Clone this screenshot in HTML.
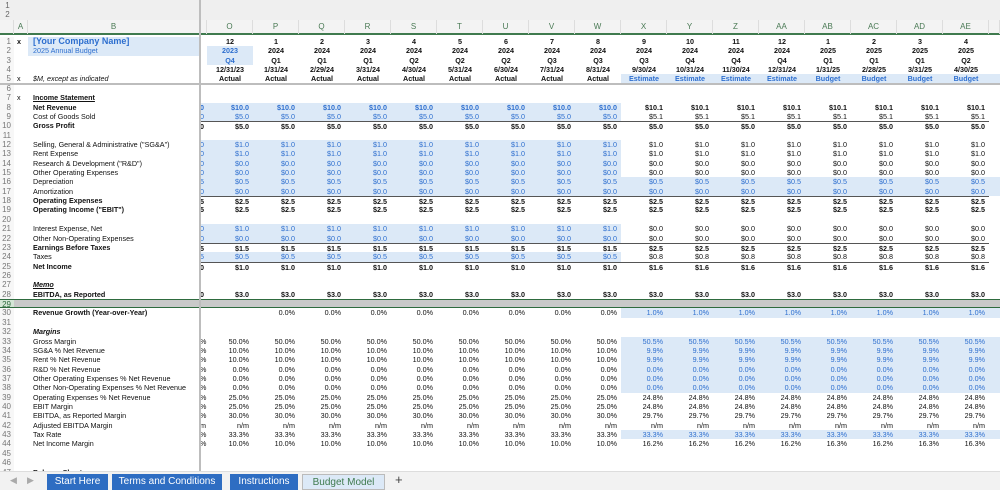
<!DOCTYPE html>
<html><head><meta charset="utf-8"><style>
*{margin:0;padding:0;box-sizing:border-box}
body{width:1000px;height:490px;overflow:hidden;background:#fff;font-family:"Liberation Sans",Arial,sans-serif;font-size:7.2px;color:#111;position:relative}
#top{position:absolute;left:0;top:0;width:1000px;height:20px;background:#efefef}
#top span{position:absolute;left:3px;width:9px;height:9px;font-size:8px;color:#666;text-align:center;line-height:9px}
#hdr{position:absolute;left:0;top:20px;width:1000px;height:15px;background:#f3f3f3;border-bottom:2px solid #3f7a4e;display:grid;grid-template-columns:14px 14px 172px 7px repeat(17,46px) 11px}
#hdr i{font-style:normal;text-align:center;line-height:14px;color:#4a7a55;font-size:8px;border-right:1px solid #ddd}
#grid{position:absolute;left:0;top:37px;width:1000px}
.r{display:grid;grid-template-columns:14px 14px 172px 7px repeat(17,46px) 11px;height:9.36px;line-height:9.36px}
.r>*{font-style:normal;text-decoration:none;text-align:right;padding-right:4px;white-space:nowrap;overflow:hidden}
.r>:first-child{text-align:right;padding-right:3px;color:#777;font-size:8px;background:#f7f7f7;font-weight:normal}
.r>:nth-child(2){text-align:left;padding-left:3px;padding-right:0}
.r>:nth-child(3){text-align:left;padding-left:5px}
.r>:nth-child(4){text-align:left;padding:0}
.c>:nth-child(n+5){text-align:center;padding-right:0}
.b>*{font-weight:bold}
.s{background:#dce9f7}
.bl{color:#2e6fcf}
.t>:nth-child(n+4){border-top:1.5px solid #555}
.sel{background:#c9c9c9;border-top:1.5px solid #2e6b3e;border-bottom:1.5px solid #2e6b3e}
.sel>:first-child{background:#d4e6d6;color:#2e6b3e}
#vf{position:absolute;left:199px;top:0;width:2px;height:471px;background:#bdbdbd}
#hf{position:absolute;left:0;top:83px;width:1000px;height:1.5px;background:#bdbdbd}
#tabs{position:absolute;left:0;top:471px;width:1000px;height:19px;background:#f2f2f2;border-top:1px solid #ddd}
#tabs div{position:absolute;top:2px;height:16px;line-height:16px;text-align:center;font-size:10px;color:#fff;background:#2e6dc2}
</style></head><body>
<div id="top"><span style="top:1px">1</span><span style="top:10px">2</span></div>
<div id="hdr"><i></i><i>A</i><i>B</i><i></i><i>O</i><i>P</i><i>Q</i><i>R</i><i>S</i><i>T</i><i>U</i><i>V</i><i>W</i><i>X</i><i>Y</i><i>Z</i><i>AA</i><i>AB</i><i>AC</i><i>AD</i><i>AE</i><i></i></div>
<div id="grid">
<div class="r c b"><i>1</i><i>x</i><i class="s bl" style="font-size:9px">[Your Company Name]</i><i></i><i>12</i><i>1</i><i>2</i><i>3</i><i>4</i><i>5</i><i>6</i><i>7</i><i>8</i><i>9</i><i>10</i><i>11</i><i>12</i><i>1</i><i>2</i><i>3</i><i>4</i></div>
<div class="r c b"><i>2</i><i></i><i class="s bl" style="font-weight:normal">2025 Annual Budget</i><i></i><i class="s bl">2023</i><i>2024</i><i>2024</i><i>2024</i><i>2024</i><i>2024</i><i>2024</i><i>2024</i><i>2024</i><i>2024</i><i>2024</i><i>2024</i><i>2024</i><i>2025</i><i>2025</i><i>2025</i><i>2025</i></div>
<div class="r c b"><i>3</i><i></i><i></i><i></i><i class="s bl">Q4</i><i>Q1</i><i>Q1</i><i>Q1</i><i>Q2</i><i>Q2</i><i>Q2</i><i>Q3</i><i>Q3</i><i>Q3</i><i>Q4</i><i>Q4</i><i>Q4</i><i>Q1</i><i>Q1</i><i>Q1</i><i>Q2</i></div>
<div class="r c b"><i>4</i><i></i><i></i><i></i><i>12/31/23</i><i>1/31/24</i><i>2/29/24</i><i>3/31/24</i><i>4/30/24</i><i>5/31/24</i><i>6/30/24</i><i>7/31/24</i><i>8/31/24</i><i>9/30/24</i><i>10/31/24</i><i>11/30/24</i><i>12/31/24</i><i>1/31/25</i><i>2/28/25</i><i>3/31/25</i><i>4/30/25</i></div>
<div class="r c b"><i>5</i><i style="font-weight:normal">x</i><i style="font-weight:normal;font-style:italic">$M, except as indicated</i><i></i><i>Actual</i><i>Actual</i><i>Actual</i><i>Actual</i><i>Actual</i><i>Actual</i><i>Actual</i><i>Actual</i><i>Actual</i><i class="s bl">Estimate</i><i class="s bl">Estimate</i><i class="s bl">Estimate</i><i class="s bl">Estimate</i><i class="s bl">Budget</i><i class="s bl">Budget</i><i class="s bl">Budget</i><i class="s bl">Budget</i><i class="s"></i></div>
<div class="r"><i>6</i></div>
<div class="r"><i>7</i><i>x</i><i style="font-weight:bold;text-decoration:underline">Income Statement</i></div>
<div class="r b"><i>8</i><i></i><i>Net Revenue</i><i class="s bl">0</i><i class="s bl">$10.0</i><i class="s bl">$10.0</i><i class="s bl">$10.0</i><i class="s bl">$10.0</i><i class="s bl">$10.0</i><i class="s bl">$10.0</i><i class="s bl">$10.0</i><i class="s bl">$10.0</i><i class="s bl">$10.0</i><i>$10.1</i><i>$10.1</i><i>$10.1</i><i>$10.1</i><i>$10.1</i><i>$10.1</i><i>$10.1</i><i>$10.1</i></div>
<div class="r"><i>9</i><i></i><i>Cost of Goods Sold</i><i class="s bl">0</i><i class="s bl">$5.0</i><i class="s bl">$5.0</i><i class="s bl">$5.0</i><i class="s bl">$5.0</i><i class="s bl">$5.0</i><i class="s bl">$5.0</i><i class="s bl">$5.0</i><i class="s bl">$5.0</i><i class="s bl">$5.0</i><i>$5.1</i><i>$5.1</i><i>$5.1</i><i>$5.1</i><i>$5.1</i><i>$5.1</i><i>$5.1</i><i>$5.1</i></div>
<div class="r b t"><i>10</i><i></i><i>Gross Profit</i><i>0</i><i>$5.0</i><i>$5.0</i><i>$5.0</i><i>$5.0</i><i>$5.0</i><i>$5.0</i><i>$5.0</i><i>$5.0</i><i>$5.0</i><i>$5.0</i><i>$5.0</i><i>$5.0</i><i>$5.0</i><i>$5.0</i><i>$5.0</i><i>$5.0</i><i>$5.0</i></div>
<div class="r"><i>11</i></div>
<div class="r"><i>12</i><i></i><i>Selling, General &amp; Administrative ("SG&amp;A")</i><i class="s bl">0</i><i class="s bl">$1.0</i><i class="s bl">$1.0</i><i class="s bl">$1.0</i><i class="s bl">$1.0</i><i class="s bl">$1.0</i><i class="s bl">$1.0</i><i class="s bl">$1.0</i><i class="s bl">$1.0</i><i class="s bl">$1.0</i><i>$1.0</i><i>$1.0</i><i>$1.0</i><i>$1.0</i><i>$1.0</i><i>$1.0</i><i>$1.0</i><i>$1.0</i></div>
<div class="r"><i>13</i><i></i><i>Rent Expense</i><i class="s bl">0</i><i class="s bl">$1.0</i><i class="s bl">$1.0</i><i class="s bl">$1.0</i><i class="s bl">$1.0</i><i class="s bl">$1.0</i><i class="s bl">$1.0</i><i class="s bl">$1.0</i><i class="s bl">$1.0</i><i class="s bl">$1.0</i><i>$1.0</i><i>$1.0</i><i>$1.0</i><i>$1.0</i><i>$1.0</i><i>$1.0</i><i>$1.0</i><i>$1.0</i></div>
<div class="r"><i>14</i><i></i><i>Research &amp; Development ("R&amp;D")</i><i class="s bl">0</i><i class="s bl">$0.0</i><i class="s bl">$0.0</i><i class="s bl">$0.0</i><i class="s bl">$0.0</i><i class="s bl">$0.0</i><i class="s bl">$0.0</i><i class="s bl">$0.0</i><i class="s bl">$0.0</i><i class="s bl">$0.0</i><i>$0.0</i><i>$0.0</i><i>$0.0</i><i>$0.0</i><i>$0.0</i><i>$0.0</i><i>$0.0</i><i>$0.0</i></div>
<div class="r"><i>15</i><i></i><i>Other Operating Expenses</i><i class="s bl">0</i><i class="s bl">$0.0</i><i class="s bl">$0.0</i><i class="s bl">$0.0</i><i class="s bl">$0.0</i><i class="s bl">$0.0</i><i class="s bl">$0.0</i><i class="s bl">$0.0</i><i class="s bl">$0.0</i><i class="s bl">$0.0</i><i>$0.0</i><i>$0.0</i><i>$0.0</i><i>$0.0</i><i>$0.0</i><i>$0.0</i><i>$0.0</i><i>$0.0</i></div>
<div class="r"><i>16</i><i></i><i>Depreciation</i><i class="s bl">5</i><i class="s bl">$0.5</i><i class="s bl">$0.5</i><i class="s bl">$0.5</i><i class="s bl">$0.5</i><i class="s bl">$0.5</i><i class="s bl">$0.5</i><i class="s bl">$0.5</i><i class="s bl">$0.5</i><i class="s bl">$0.5</i><i class="s bl">$0.5</i><i class="s bl">$0.5</i><i class="s bl">$0.5</i><i class="s bl">$0.5</i><i class="s bl">$0.5</i><i class="s bl">$0.5</i><i class="s bl">$0.5</i><i class="s bl">$0.5</i><i class="s"></i></div>
<div class="r"><i>17</i><i></i><i>Amortization</i><i class="s bl">0</i><i class="s bl">$0.0</i><i class="s bl">$0.0</i><i class="s bl">$0.0</i><i class="s bl">$0.0</i><i class="s bl">$0.0</i><i class="s bl">$0.0</i><i class="s bl">$0.0</i><i class="s bl">$0.0</i><i class="s bl">$0.0</i><i class="s bl">$0.0</i><i class="s bl">$0.0</i><i class="s bl">$0.0</i><i class="s bl">$0.0</i><i class="s bl">$0.0</i><i class="s bl">$0.0</i><i class="s bl">$0.0</i><i class="s bl">$0.0</i><i class="s"></i></div>
<div class="r b t"><i>18</i><i></i><i>Operating Expenses</i><i>5</i><i>$2.5</i><i>$2.5</i><i>$2.5</i><i>$2.5</i><i>$2.5</i><i>$2.5</i><i>$2.5</i><i>$2.5</i><i>$2.5</i><i>$2.5</i><i>$2.5</i><i>$2.5</i><i>$2.5</i><i>$2.5</i><i>$2.5</i><i>$2.5</i><i>$2.5</i></div>
<div class="r b"><i>19</i><i></i><i>Operating Income ("EBIT")</i><i>5</i><i>$2.5</i><i>$2.5</i><i>$2.5</i><i>$2.5</i><i>$2.5</i><i>$2.5</i><i>$2.5</i><i>$2.5</i><i>$2.5</i><i>$2.5</i><i>$2.5</i><i>$2.5</i><i>$2.5</i><i>$2.5</i><i>$2.5</i><i>$2.5</i><i>$2.5</i></div>
<div class="r"><i>20</i></div>
<div class="r"><i>21</i><i></i><i>Interest Expense, Net</i><i class="s bl">0</i><i class="s bl">$1.0</i><i class="s bl">$1.0</i><i class="s bl">$1.0</i><i class="s bl">$1.0</i><i class="s bl">$1.0</i><i class="s bl">$1.0</i><i class="s bl">$1.0</i><i class="s bl">$1.0</i><i class="s bl">$1.0</i><i>$0.0</i><i>$0.0</i><i>$0.0</i><i>$0.0</i><i>$0.0</i><i>$0.0</i><i>$0.0</i><i>$0.0</i></div>
<div class="r"><i>22</i><i></i><i>Other Non-Operating Expenses</i><i class="s bl">0</i><i class="s bl">$0.0</i><i class="s bl">$0.0</i><i class="s bl">$0.0</i><i class="s bl">$0.0</i><i class="s bl">$0.0</i><i class="s bl">$0.0</i><i class="s bl">$0.0</i><i class="s bl">$0.0</i><i class="s bl">$0.0</i><i>$0.0</i><i>$0.0</i><i>$0.0</i><i>$0.0</i><i>$0.0</i><i>$0.0</i><i>$0.0</i><i>$0.0</i></div>
<div class="r b t"><i>23</i><i></i><i>Earnings Before Taxes</i><i>5</i><i>$1.5</i><i>$1.5</i><i>$1.5</i><i>$1.5</i><i>$1.5</i><i>$1.5</i><i>$1.5</i><i>$1.5</i><i>$1.5</i><i>$2.5</i><i>$2.5</i><i>$2.5</i><i>$2.5</i><i>$2.5</i><i>$2.5</i><i>$2.5</i><i>$2.5</i></div>
<div class="r"><i>24</i><i></i><i>Taxes</i><i class="s bl">5</i><i class="s bl">$0.5</i><i class="s bl">$0.5</i><i class="s bl">$0.5</i><i class="s bl">$0.5</i><i class="s bl">$0.5</i><i class="s bl">$0.5</i><i class="s bl">$0.5</i><i class="s bl">$0.5</i><i class="s bl">$0.5</i><i>$0.8</i><i>$0.8</i><i>$0.8</i><i>$0.8</i><i>$0.8</i><i>$0.8</i><i>$0.8</i><i>$0.8</i></div>
<div class="r b t"><i>25</i><i></i><i>Net Income</i><i>0</i><i>$1.0</i><i>$1.0</i><i>$1.0</i><i>$1.0</i><i>$1.0</i><i>$1.0</i><i>$1.0</i><i>$1.0</i><i>$1.0</i><i>$1.6</i><i>$1.6</i><i>$1.6</i><i>$1.6</i><i>$1.6</i><i>$1.6</i><i>$1.6</i><i>$1.6</i></div>
<div class="r"><i>26</i></div>
<div class="r"><i>27</i><i></i><i style="font-weight:bold;font-style:italic;text-decoration:underline">Memo</i></div>
<div class="r b"><i>28</i><i></i><i>EBITDA, as Reported</i><i>0</i><i>$3.0</i><i>$3.0</i><i>$3.0</i><i>$3.0</i><i>$3.0</i><i>$3.0</i><i>$3.0</i><i>$3.0</i><i>$3.0</i><i>$3.0</i><i>$3.0</i><i>$3.0</i><i>$3.0</i><i>$3.0</i><i>$3.0</i><i>$3.0</i><i>$3.0</i></div>
<div class="r sel"><i>29</i></div>
<div class="r"><i>30</i><i></i><i style="font-weight:bold">Revenue Growth (Year-over-Year)</i><i></i><i></i><i>0.0%</i><i>0.0%</i><i>0.0%</i><i>0.0%</i><i>0.0%</i><i>0.0%</i><i>0.0%</i><i>0.0%</i><i class="s bl">1.0%</i><i class="s bl">1.0%</i><i class="s bl">1.0%</i><i class="s bl">1.0%</i><i class="s bl">1.0%</i><i class="s bl">1.0%</i><i class="s bl">1.0%</i><i class="s bl">1.0%</i><i class="s"></i></div>
<div class="r"><i>31</i></div>
<div class="r"><i>32</i><i></i><i style="font-weight:bold;font-style:italic">Margins</i></div>
<div class="r"><i>33</i><i></i><i>Gross Margin</i><i>%</i><i>50.0%</i><i>50.0%</i><i>50.0%</i><i>50.0%</i><i>50.0%</i><i>50.0%</i><i>50.0%</i><i>50.0%</i><i>50.0%</i><i class="s bl">50.5%</i><i class="s bl">50.5%</i><i class="s bl">50.5%</i><i class="s bl">50.5%</i><i class="s bl">50.5%</i><i class="s bl">50.5%</i><i class="s bl">50.5%</i><i class="s bl">50.5%</i><i class="s"></i></div>
<div class="r"><i>34</i><i></i><i>SG&amp;A % Net Revenue</i><i>%</i><i>10.0%</i><i>10.0%</i><i>10.0%</i><i>10.0%</i><i>10.0%</i><i>10.0%</i><i>10.0%</i><i>10.0%</i><i>10.0%</i><i class="s bl">9.9%</i><i class="s bl">9.9%</i><i class="s bl">9.9%</i><i class="s bl">9.9%</i><i class="s bl">9.9%</i><i class="s bl">9.9%</i><i class="s bl">9.9%</i><i class="s bl">9.9%</i><i class="s"></i></div>
<div class="r"><i>35</i><i></i><i>Rent % Net Revenue</i><i>%</i><i>10.0%</i><i>10.0%</i><i>10.0%</i><i>10.0%</i><i>10.0%</i><i>10.0%</i><i>10.0%</i><i>10.0%</i><i>10.0%</i><i class="s bl">9.9%</i><i class="s bl">9.9%</i><i class="s bl">9.9%</i><i class="s bl">9.9%</i><i class="s bl">9.9%</i><i class="s bl">9.9%</i><i class="s bl">9.9%</i><i class="s bl">9.9%</i><i class="s"></i></div>
<div class="r"><i>36</i><i></i><i>R&amp;D % Net Revenue</i><i>%</i><i>0.0%</i><i>0.0%</i><i>0.0%</i><i>0.0%</i><i>0.0%</i><i>0.0%</i><i>0.0%</i><i>0.0%</i><i>0.0%</i><i class="s bl">0.0%</i><i class="s bl">0.0%</i><i class="s bl">0.0%</i><i class="s bl">0.0%</i><i class="s bl">0.0%</i><i class="s bl">0.0%</i><i class="s bl">0.0%</i><i class="s bl">0.0%</i><i class="s"></i></div>
<div class="r"><i>37</i><i></i><i>Other Operating Expenses % Net Revenue</i><i>%</i><i>0.0%</i><i>0.0%</i><i>0.0%</i><i>0.0%</i><i>0.0%</i><i>0.0%</i><i>0.0%</i><i>0.0%</i><i>0.0%</i><i class="s bl">0.0%</i><i class="s bl">0.0%</i><i class="s bl">0.0%</i><i class="s bl">0.0%</i><i class="s bl">0.0%</i><i class="s bl">0.0%</i><i class="s bl">0.0%</i><i class="s bl">0.0%</i><i class="s"></i></div>
<div class="r"><i>38</i><i></i><i>Other Non-Operating Expenses % Net Revenue</i><i>%</i><i>0.0%</i><i>0.0%</i><i>0.0%</i><i>0.0%</i><i>0.0%</i><i>0.0%</i><i>0.0%</i><i>0.0%</i><i>0.0%</i><i class="s bl">0.0%</i><i class="s bl">0.0%</i><i class="s bl">0.0%</i><i class="s bl">0.0%</i><i class="s bl">0.0%</i><i class="s bl">0.0%</i><i class="s bl">0.0%</i><i class="s bl">0.0%</i><i class="s"></i></div>
<div class="r"><i>39</i><i></i><i>Operating Expenses % Net Revenue</i><i>%</i><i>25.0%</i><i>25.0%</i><i>25.0%</i><i>25.0%</i><i>25.0%</i><i>25.0%</i><i>25.0%</i><i>25.0%</i><i>25.0%</i><i>24.8%</i><i>24.8%</i><i>24.8%</i><i>24.8%</i><i>24.8%</i><i>24.8%</i><i>24.8%</i><i>24.8%</i></div>
<div class="r"><i>40</i><i></i><i>EBIT Margin</i><i>%</i><i>25.0%</i><i>25.0%</i><i>25.0%</i><i>25.0%</i><i>25.0%</i><i>25.0%</i><i>25.0%</i><i>25.0%</i><i>25.0%</i><i>24.8%</i><i>24.8%</i><i>24.8%</i><i>24.8%</i><i>24.8%</i><i>24.8%</i><i>24.8%</i><i>24.8%</i></div>
<div class="r"><i>41</i><i></i><i>EBITDA, as Reported Margin</i><i>%</i><i>30.0%</i><i>30.0%</i><i>30.0%</i><i>30.0%</i><i>30.0%</i><i>30.0%</i><i>30.0%</i><i>30.0%</i><i>30.0%</i><i>29.7%</i><i>29.7%</i><i>29.7%</i><i>29.7%</i><i>29.7%</i><i>29.7%</i><i>29.7%</i><i>29.7%</i></div>
<div class="r"><i>42</i><i></i><i>Adjusted EBITDA Margin</i><i>m</i><i>n/m</i><i>n/m</i><i>n/m</i><i>n/m</i><i>n/m</i><i>n/m</i><i>n/m</i><i>n/m</i><i>n/m</i><i>n/m</i><i>n/m</i><i>n/m</i><i>n/m</i><i>n/m</i><i>n/m</i><i>n/m</i><i>n/m</i></div>
<div class="r"><i>43</i><i></i><i>Tax Rate</i><i>%</i><i>33.3%</i><i>33.3%</i><i>33.3%</i><i>33.3%</i><i>33.3%</i><i>33.3%</i><i>33.3%</i><i>33.3%</i><i>33.3%</i><i class="s bl">33.3%</i><i class="s bl">33.3%</i><i class="s bl">33.3%</i><i class="s bl">33.3%</i><i class="s bl">33.3%</i><i class="s bl">33.3%</i><i class="s bl">33.3%</i><i class="s bl">33.3%</i><i class="s"></i></div>
<div class="r"><i>44</i><i></i><i>Net Income Margin</i><i>%</i><i>10.0%</i><i>10.0%</i><i>10.0%</i><i>10.0%</i><i>10.0%</i><i>10.0%</i><i>10.0%</i><i>10.0%</i><i>10.0%</i><i>16.2%</i><i>16.2%</i><i>16.2%</i><i>16.2%</i><i>16.3%</i><i>16.2%</i><i>16.3%</i><i>16.3%</i></div>
<div class="r"><i>45</i></div>
<div class="r"><i>46</i></div>
<div class="r"><i>47</i><i>x</i><i style="font-weight:bold;text-decoration:underline">Balance Sheet</i></div>
</div>
<div id="vf"></div>
<div id="hf"></div>
<div id="tabs">
<span style="position:absolute;left:10px;top:3px;color:#aaa;font-size:9px">&#9664;</span>
<span style="position:absolute;left:27px;top:3px;color:#aaa;font-size:9px">&#9654;</span>
<div style="left:47px;width:61px">Start Here</div>
<div style="left:112px;width:110px">Terms and Conditions</div>
<div style="left:230px;width:68px">Instructions</div>
<div style="left:302px;width:83px;background:#dce9f7;color:#3f7a4e;border:1px solid #bbb">Budget Model</div>
<span style="position:absolute;left:395px;top:0;font-size:13px;color:#444">+</span>
</div>
</body></html>
